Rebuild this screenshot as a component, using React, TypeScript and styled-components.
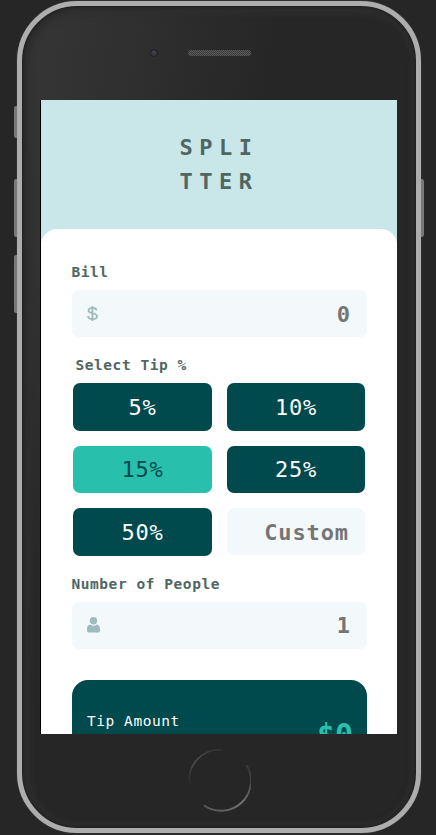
import React, { useState } from "react";
import styled, { createGlobalStyle } from "styled-components";

const GlobalStyle = createGlobalStyle`
  * { box-sizing: border-box; }
  body {
    margin: 0;
    background: #262626;
    font-family: "DejaVu Sans Mono", monospace;
    overflow: hidden;
  }
`;

const Stage = styled.main`
  width: 436px;
  height: 835px;
  padding: 1px 15px 1px 17px;
  overflow: hidden;
  background: #262626;
`;

const Phone = styled.div`
  position: relative;
  display: flex;
  flex-direction: column;
  width: 404px;
  height: 832px;
  padding-left: 18px;
  border: 5px solid #adadad;
  border-radius: 60px;
  background: linear-gradient(to bottom, transparent 30%, #262626 85%),
    linear-gradient(100deg, #363636 0%, #303030 20%, #262626 48%);
  box-shadow: inset 0 0 2px 1px #202020, inset 0 0 4px 4px #2a2a2a, inset 2px 2px 6px 6px #303030,
    0 0 1px #777;
`;

const SideButton = styled.span<{ $side: "left" | "right"; $top: number; $height: number }>`
  position: absolute;
  ${(p) => p.$side}: -8px;
  top: ${(p) => p.$top}px;
  width: 3px;
  height: ${(p) => p.$height}px;
  background: #787878;
  border-radius: ${(p) => (p.$side === "left" ? "2px 0 0 2px" : "0 2px 2px 0")};
`;

const TopBezel = styled.div`
  display: flex;
  align-items: flex-start;
  flex: 0 0 94px;
  padding: 41.5px 0 0 109px;
`;

const Camera = styled.svg`
  width: 10px;
  height: 10px;
`;

const Speaker = styled.span`
  width: 63px;
  height: 6px;
  margin: 2px 0 0 29px;
  border-radius: 3px;
  background: repeating-conic-gradient(#5b5b5b 0 25%, #393939 0 50%) 0 0 / 2px 2px;
`;

const BottomBezel = styled.div`
  display: flex;
  padding: 14px 0 0 147px;
`;

const HomeButton = styled.svg`
  width: 64px;
  height: 64px;
`;

const Screen = styled.div`
  flex: 0 0 634px;
  width: 357px;
  overflow: hidden;
  border-left: 1px solid #000;
  background: #c9e7e8;
`;

const Header = styled.header`
  height: 129px;
  padding-top: 31px;
`;

const Title = styled.h1`
  margin: 0 0 0 138.5px;
  color: #4f6663;
  font-size: 22px;
  font-weight: 700;
  line-height: 34px;
  letter-spacing: 6.5px;
`;

const Card = styled.section`
  display: flex;
  flex-direction: column;
  height: 620px;
  padding: 30px 30px 0 30.5px;
  border-radius: 16px 16px 0 0;
  background: #fff;

  & > * { flex-shrink: 0; }
`;

const Label = styled.label<{ $indent?: number }>`
  display: block;
  height: 31px;
  padding-left: ${(p) => p.$indent ?? 0}px;
  color: #4f6663;
  font-size: 14.5px;
  font-weight: 700;
  line-height: 26px;
  letter-spacing: 0.55px;
`;

const Field = styled.div`
  display: flex;
  align-items: center;
  height: 47px;
  padding: 0 16px 0 15px;
  border-radius: 7px;
  background: #f3f8fb;
`;

const Input = styled.input`
  flex: 1;
  min-width: 0;
  width: 100%;
  height: 47px;
  padding: 1px 0 0;
  border: 0;
  outline: 0;
  background: transparent;
  color: #757575;
  font: 700 22px "DejaVu Sans Mono", monospace;
  letter-spacing: 0.9px;
  text-align: right;
  &::placeholder { color: #757575; opacity: 1; }
`;

const FieldIcon = styled.svg`
  flex: none;
  overflow: visible;
`;

const TipGrid = styled.div`
  display: grid;
  grid-template-columns: 139px 138px;
  grid-auto-rows: 47.5px;
  gap: 15px;
  padding-left: 1.5px;
`;

const TipButton = styled.button<{ $active: boolean }>`
  padding: 1px 0 0;
  border: 0;
  border-radius: 7px;
  background: ${(p) => (p.$active ? "#28c0ac" : "#00494d")};
  color: ${(p) => (p.$active ? "#00494d" : "#fff")};
  font: 22px "DejaVu Sans Mono", monospace;
  letter-spacing: 0.8px;
`;

const Spacer = styled.div<{ $size: number }>`
  height: ${(p) => p.$size}px;
`;

const Result = styled.div`
  display: flex;
  justify-content: space-between;
  height: 220px;
  margin-top: 31px;
  padding: 28px 14px 0 15.5px;
  border-radius: 16px;
  background: #00494d;
`;

const ResultLabel = styled.span`
  color: #fff;
  font-size: 14.5px;
  line-height: 26px;
  letter-spacing: 0.55px;
`;

const Amount = styled.span`
  padding-top: 7px;
  color: #28c0ac;
  font-size: 30px;
  font-weight: 700;
  line-height: 40px;
`;

const tips = [5, 10, 15, 25, 50];

export default function App() {
  const [selected, setSelected] = useState(15);
  return (
    <>
      <GlobalStyle />
      <Stage>
        <Phone>
          <SideButton $side="left" $top={100} $height={32} />
          <SideButton $side="left" $top={173} $height={58} />
          <SideButton $side="left" $top={249} $height={58} />
          <SideButton $side="right" $top={173} $height={58} />
          <TopBezel>
            <Camera viewBox="0 0 10 10">
              <circle cx="5" cy="5" r="4" fill="#22222a" />
              <circle cx="5" cy="5" r="2.2" fill="#292930" stroke="#484850" />
              <circle cx="5" cy="4.5" r="0.7" fill="#777" />
            </Camera>
            <Speaker />
          </TopBezel>
          <Screen>
            <Header>
              <Title>SPLI<br />TTER</Title>
            </Header>
            <Card>
              <Label htmlFor="bill">Bill</Label>
              <Field>
                <FieldIcon width="11" height="17" viewBox="0 0 11 17">
                  <path d="M5.4 1v15M9.7 5.4C9.3 3.8 7.8 2.9 5.5 2.9c-2.4 0-4 1-4 2.7 0 4.1 8.5 1.3 8.5 5.7 0 1.800-1.700 2.900-4.400 2.900-2.700 0-4.300-1.100-4.600-3" fill="none" stroke="#9ebbbd" strokeWidth="1.8" />
                </FieldIcon>
                <Input id="bill" placeholder="0" />
              </Field>
              <Spacer $size={15} />
              <Label as="span" $indent={4}>Select Tip %</Label>
              <TipGrid>
                {tips.map((tip) => (
                  <TipButton key={tip} $active={tip === selected} onClick={() => setSelected(tip)}>
                    {tip}%
                  </TipButton>
                ))}
                <Field>
                  <Input placeholder="Custom" aria-label="Custom" />
                </Field>
              </TipGrid>
              <Spacer $size={15} />
              <Label htmlFor="people">Number of People</Label>
              <Field>
                <FieldIcon width="13" height="16" viewBox="0 0 13 16">
                  <circle cx="6.5" cy="3.8" r="3.7" fill="#9ebbbd" />
                  <path d="M3.1 7.5c2 1.6 4.8 1.6 6.8 0 2 .4 3.1 2.2 3.1 4.4v1.3c0 1.5-.8 2.3-2.3 2.3H2.3C.8 15.5 0 14.7 0 13.2v-1.3c0-2.2 1.1-4 3.1-4.4z" fill="#9ebbbd" />
                </FieldIcon>
                <Input id="people" placeholder="1" />
              </Field>
              <Result>
                <ResultLabel>Tip Amount</ResultLabel>
                <Amount>$0</Amount>
              </Result>
            </Card>
          </Screen>
          <BottomBezel>
            <HomeButton viewBox="0 0 64 64" fill="none">
              <defs>
                <linearGradient id="upperArc" x1="0" y1="1" x2="1" y2="0">
                  <stop offset="0" stopColor="#262626" />
                  <stop offset="0.4" stopColor="#505050" />
                  <stop offset="1" stopColor="#303030" />
                </linearGradient>
                <linearGradient id="lowerArc" x1="0" y1="1" x2="1" y2="0">
                  <stop offset="0" stopColor="#555" />
                  <stop offset="0.5" stopColor="#747474" />
                  <stop offset="1" stopColor="#303030" />
                </linearGradient>
              </defs>
              <path d="M3 38A30 30 0 0 1 36 2" stroke="url(#upperArc)" strokeWidth="1.5" />
              <path d="M17 57.500A30 30 0 0 0 59.500 17" stroke="url(#lowerArc)" strokeWidth="1.8" />
            </HomeButton>
          </BottomBezel>
        </Phone>
      </Stage>
    </>
  );
}
